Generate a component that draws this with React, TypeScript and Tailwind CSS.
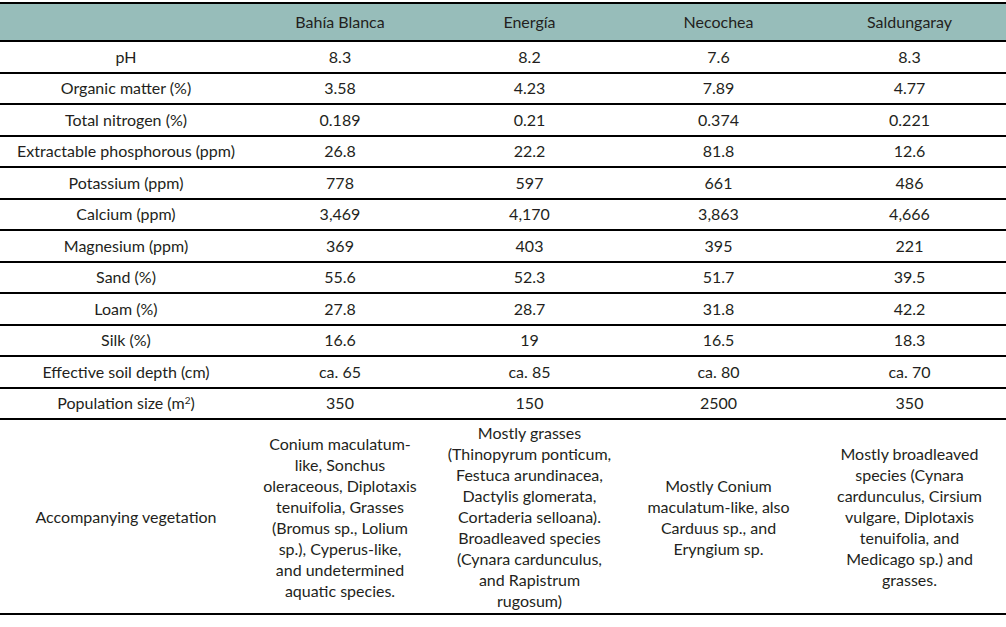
import React from 'react';

const sites = ['Bahía Blanca', 'Energía', 'Necochea', 'Saldungaray'];

const rows: { label: React.ReactNode; values: string[] }[] = [
  { label: 'pH', values: ['8.3', '8.2', '7.6', '8.3'] },
  { label: 'Organic matter (%)', values: ['3.58', '4.23', '7.89', '4.77'] },
  { label: 'Total nitrogen (%)', values: ['0.189', '0.21', '0.374', '0.221'] },
  { label: 'Extractable phosphorous (ppm)', values: ['26.8', '22.2', '81.8', '12.6'] },
  { label: 'Potassium (ppm)', values: ['778', '597', '661', '486'] },
  { label: 'Calcium (ppm)', values: ['3,469', '4,170', '3,863', '4,666'] },
  { label: 'Magnesium (ppm)', values: ['369', '403', '395', '221'] },
  { label: 'Sand (%)', values: ['55.6', '52.3', '51.7', '39.5'] },
  { label: 'Loam (%)', values: ['27.8', '28.7', '31.8', '42.2'] },
  { label: 'Silk (%)', values: ['16.6', '19', '16.5', '18.3'] },
  { label: 'Effective soil depth (cm)', values: ['ca. 65', 'ca. 85', 'ca. 80', 'ca. 70'] },
  {
    label: (
      <>
        Population size (m<sup className="text-[10px]">2</sup>)
      </>
    ),
    values: ['350', '150', '2500', '350'],
  },
];

// line breaks follow the printed table
const vegetation = [
  [
    'Conium maculatum-',
    'like, Sonchus',
    'oleraceous, Diplotaxis',
    'tenuifolia, Grasses',
    '(Bromus sp., Lolium',
    'sp.), Cyperus-like,',
    'and undetermined',
    'aquatic species.',
  ],
  [
    'Mostly grasses',
    '(Thinopyrum ponticum,',
    'Festuca arundinacea,',
    'Dactylis glomerata,',
    'Cortaderia selloana).',
    'Broadleaved species',
    '(Cynara cardunculus,',
    'and Rapistrum',
    'rugosum)',
  ],
  ['Mostly Conium', 'maculatum-like, also', 'Carduus sp., and', 'Eryngium sp.'],
  [
    'Mostly broadleaved',
    'species (Cynara',
    'cardunculus, Cirsium',
    'vulgare, Diplotaxis',
    'tenuifolia, and',
    'Medicago sp.) and',
    'grasses.',
  ],
];

export default function App() {
  return (
    <div className="w-[1006px] h-[627px] bg-white pt-[2px] font-['Lato',sans-serif] text-[16px] text-[#231f20]">
      <table className="w-full border-collapse table-fixed">
        <colgroup>
          <col className="w-[245px]" />
          <col className="w-[190px]" />
          <col className="w-[189px]" />
          <col className="w-[189px]" />
          <col />
        </colgroup>
        <thead>
          <tr className="bg-[#97bdba] border-t-2 border-b-2 border-black h-[38px]">
            <th />
            {sites.map((s) => (
              <th key={s} className="font-normal text-center">
                {s}
              </th>
            ))}
          </tr>
        </thead>
        <tbody>
          {rows.map((r, i) => (
            <tr key={i} className="border-b-2 border-black h-[31.5px]">
              <td className="text-center whitespace-nowrap pl-[7px]">{r.label}</td>
              {r.values.map((v, j) => (
                <td key={j} className="text-center">
                  {v}
                </td>
              ))}
            </tr>
          ))}
          <tr className="border-b-2 border-black h-[195px]">
            <td className="text-center pl-[7px]">Accompanying vegetation</td>
            {vegetation.map((lines, j) => (
              <td key={j} className="text-center leading-[21px] whitespace-nowrap">
                {lines.map((l, k) => (
                  <div key={k}>{l}</div>
                ))}
              </td>
            ))}
          </tr>
        </tbody>
      </table>
    </div>
  );
}
